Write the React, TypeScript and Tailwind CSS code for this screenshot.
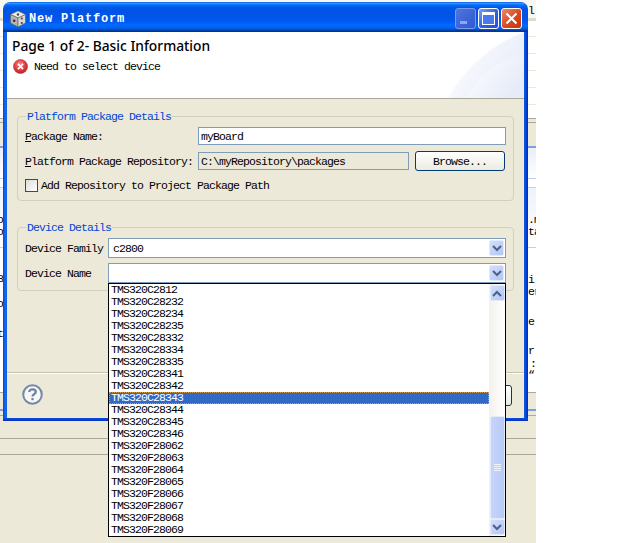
import React from "react";

const monoBase = "font-['Liberation_Mono',monospace] text-[11.5px] tracking-[-0.9px] leading-[12px]";
const mono = `${monoBase} text-black`;
// flex rows center their children, so 2px of top padding moves the text down by 1px
const label = `${mono} pt-[2px]`;

const devices = [
  "TMS320C2812", "TMS320C28232", "TMS320C28234", "TMS320C28235", "TMS320C28332", "TMS320C28334", "TMS320C28335",
  "TMS320C28341", "TMS320C28342", "TMS320C28343", "TMS320C28344", "TMS320C28345", "TMS320C28346", "TMS320F28062",
  "TMS320F28063", "TMS320F28064", "TMS320F28065", "TMS320F28066", "TMS320F28067", "TMS320F28068", "TMS320F28069",
];

function Chevron({ up = false }: { up?: boolean }) {
  return (
    <svg width="10" height="7" viewBox="0 0 10 7">
      <path d={up ? "M1 6 L5 2 L9 6" : "M1 1 L5 5 L9 1"} fill="none" stroke="#4d6185" strokeWidth="2" />
    </svg>
  );
}

function ArrowButton({ up = false }: { up?: boolean }) {
  return (
    <div className="w-[15px] h-[16px] rounded-[2px] border border-[#e2eafc] bg-gradient-to-br from-[#d3dffc] to-[#b2c5f6] flex items-center justify-center">
      <Chevron up={up} />
    </div>
  );
}

function Combo({ value }: { value: string }) {
  return (
    <div className="flex-1 h-[20px] border border-[#7f9db9] bg-white flex items-center justify-between pl-[4px] pr-[1px]">
      <span className={label}>{value}</span>
      <ArrowButton />
    </div>
  );
}

function Group({ title, children }: { title: string; children: React.ReactNode }) {
  return (
    <fieldset className="mx-[10px] w-[497px] border border-[#d0d0bf] rounded-[4px] pl-[7px] pr-[7px]">
      <legend className={`${monoBase} text-[#0046d5] ml-[1px] px-[1px] translate-y-[1px]`}>{title}</legend>
      {children}
    </fieldset>
  );
}

function DiceIcon() {
  return (
    <svg width="18" height="18" viewBox="0 0 18 18" className="shrink-0">
      <path d="M9 1 L16.5 4.5 L9 8 L1.5 4.5 Z" fill="#ecece8" stroke="#6d6d6d" strokeWidth="0.6" />
      <path d="M1.5 4.5 L9 8 V17 L1.5 13 Z" fill="#b5b5b0" stroke="#5a5a5a" strokeWidth="0.6" />
      <path d="M16.5 4.5 L9 8 V17 L16.5 13 Z" fill="#d8d8d3" stroke="#5a5a5a" strokeWidth="0.6" />
      <circle cx="9" cy="4.5" r="1.2" fill="#444" />
      <circle cx="5.2" cy="10.8" r="1.3" fill="#333" />
      <circle cx="12.8" cy="8.5" r="1.1" fill="#444" />
      <circle cx="12.8" cy="13" r="1.1" fill="#444" />
    </svg>
  );
}

function ErrorIcon() {
  return (
    <svg width="15" height="15" viewBox="0 0 15 15" className="shrink-0">
      <defs>
        <radialGradient id="err" cx="45%" cy="35%" r="70%">
          <stop offset="0" stopColor="#f78b8b" />
          <stop offset="0.6" stopColor="#dc3a3f" />
          <stop offset="1" stopColor="#b01c25" />
        </radialGradient>
      </defs>
      <circle cx="7.5" cy="7.5" r="7" fill="url(#err)" stroke="#a8333a" strokeWidth="0.6" />
      <path d="M5 4.8 L10 10.2 M10 4.8 L5 10.2" stroke="#fff" strokeWidth="1.8" />
    </svg>
  );
}

function HelpIcon() {
  return (
    <svg width="21" height="21" viewBox="0 0 21 21">
      <circle cx="10.5" cy="10.5" r="9.3" fill="#f6f6f4" stroke="#7488a8" strokeWidth="2" />
      <path d="M7.2 8 C7.2 4.6 13.8 4.6 13.8 8 C13.8 10.3 10.5 10 10.5 12.6" fill="none" stroke="#6d7f9f" strokeWidth="2.2" />
      <rect x="9.4" y="14" width="2.2" height="2.2" fill="#6d7f9f" />
    </svg>
  );
}

function Caption({ kind }: { kind: "min" | "max" | "close" }) {
  if (kind === "close") {
    return (
      <div className="w-[21px] h-[21px] rounded-[3px] border border-white bg-[linear-gradient(135deg,#ea8a6c,#d9481f_55%,#c5350c)] flex items-center justify-center">
        <svg width="13" height="13" viewBox="0 0 13 13">
          <path d="M1.5 1.5 L11.5 11.5 M11.5 1.5 L1.5 11.5" stroke="#fff" strokeWidth="2" />
        </svg>
      </div>
    );
  }
  if (kind === "max") {
    return (
      <div className="w-[21px] h-[21px] rounded-[3px] border border-white bg-[linear-gradient(135deg,#7f9ff0,#2f5fe0_55%,#2450d8)] flex items-center justify-center">
        <div className="w-[13px] h-[13px] border border-white border-t-[3px] bg-[#4a78ee]" />
      </div>
    );
  }
  return (
    <div className="w-[21px] h-[21px] rounded-[3px] border border-[#7d9ae8] bg-[linear-gradient(135deg,#4f74dc,#2f59d4)] flex items-end pl-[4px] pb-[4px]">
      <div className="w-[7px] h-[3px] bg-[#8fa6ea]" />
    </div>
  );
}

function Dialog() {
  return (
    <div className="absolute left-[3px] top-[2px] w-[525px] h-[419px] flex flex-col">
      {/* title bar */}
      <div className="h-[30px] shrink-0 rounded-t-[7px] flex items-center pl-[6px] pr-[6px] pt-[3px] bg-[linear-gradient(180deg,#0058ee_0%,#3593ff_4%,#288eff_6%,#127dff_8%,#036ffc_10%,#0262ee_14%,#0057e5_20%,#0054e3_24%,#0055eb_56%,#005bf5_66%,#026afe_76%,#0062ef_86%,#0052d6_92%,#0040ab_94%,#003092_100%)]">
        <DiceIcon />
        <span className="ml-[2px] font-['Liberation_Mono',monospace] font-bold text-[12px] tracking-[0.8px] text-white">New Platform</span>
        <div className="ml-auto flex gap-[2px]">
          <Caption kind="min" />
          <Caption kind="max" />
          <Caption kind="close" />
        </div>
      </div>

      <div className="flex-1 flex min-h-0">
        <div className="w-[4px] bg-gradient-to-r from-[#0c3fd6] via-[#1767ee] to-[#0f5fea]" />
        <div className="w-[517px] flex flex-col bg-[#ece9d8]">
          {/* header */}
          <div className="relative h-[67px] shrink-0 bg-white border-b border-[#aca899] pl-[5px] pt-[6px]">
            <svg className="absolute right-0 top-0" width="80" height="66" viewBox="0 0 80 66">
              <defs>
                <linearGradient id="arc" x1="0" x2="1" y1="0" y2="0.6">
                  <stop offset="0.1" stopColor="#ffffff" />
                  <stop offset="1" stopColor="#e6ebf8" />
                </linearGradient>
              </defs>
              <path d="M4 66 Q30 20 80 0 V66 Z" fill="url(#arc)" />
              <path d="M22 66 Q42 30 80 22 V66 Z" fill="url(#arc)" opacity="0.75" />
            </svg>
            <div className="relative font-['Noto_Sans',sans-serif] font-medium text-[13.8px] leading-[16px] text-black">Page 1 of 2- Basic Information</div>
            <div className="relative mt-[5px] ml-[1px] flex items-center gap-[6px]">
              <ErrorIcon />
              <span className={mono}>Need to select device</span>
            </div>
          </div>

          <div className="flex-1 flex flex-col pt-[11px]">
            <Group title="Platform Package Details">
              <div className="mt-[5px] flex items-center h-[18px]">
                <span className={`${label} w-[173px]`}><u>P</u>ackage Name:</span>
                <div className={`${label} flex-1 h-[18px] border border-[#7f9db9] bg-white pl-[2px] flex items-center`}>myBoard</div>
              </div>
              <div className="mt-[6px] flex items-center h-[20px]">
                <span className={`${label} w-[173px]`}><u>P</u>latform Package Repository:</span>
                <div className={`${label} w-[211px] h-[18px] border border-[#7f9db9] pl-[2px] flex items-center`}>C:\myRepository\packages</div>
                <button className={`${label} ml-[6px] w-[90px] h-[20px] rounded-[3px] border border-[#003c74] bg-gradient-to-b from-white to-[#ecebe0] flex items-center justify-center`}>Browse...</button>
              </div>
              <div className="mt-[7px] mb-[8px] flex items-center gap-[3px] h-[14px]">
                <div className="w-[13px] h-[13px] border border-[#1c5180] bg-gradient-to-br from-[#dcdcd7] to-white" />
                <span className={label}>Add Repository to Project Package Path</span>
              </div>
            </Group>

            <div className="h-[20px] shrink-0" />

            <Group title="Device Details">
              <div className="mt-[5px] flex items-center">
                <span className={`${label} w-[83px]`}>Device Family</span>
                <Combo value="c2800" />
              </div>
              <div className="mt-[5px] mb-[7px] flex items-center">
                <span className={`${label} w-[83px]`}>Device Name</span>
                <Combo value="" />
              </div>
            </Group>

            {/* footer */}
            <div className="mt-auto h-[46px] shrink-0 border-t border-t-[#c4c2b3] shadow-[inset_0_1px_0_#fff] flex items-start justify-between pl-[15px] pr-[12px]">
              <div className="mt-[11px]"><HelpIcon /></div>
              <div className="mt-[12px] w-[75px] h-[21px] rounded-[3px] border border-[#003c74] bg-gradient-to-b from-white to-[#ecebe0]" />
            </div>
          </div>
        </div>
        <div className="w-[4px] bg-gradient-to-r from-[#0b5be6] via-[#0b46d8] to-[#0029b0]" />
      </div>
      <div className="h-[3px] shrink-0 bg-gradient-to-b from-[#0b50e0] to-[#0a2fb8]" />
    </div>
  );
}

function DeviceList() {
  return (
    <div className="absolute left-[108px] top-[283px] w-[398px] h-[254px] border border-black bg-white flex">
      <div className="w-[380px]">
        {devices.map((d) =>
          d === "TMS320C28343" ? (
            <div key={d} className={`h-[12px] pl-[2px] ${monoBase} text-white bg-[#316ac5] outline-1 outline-dotted outline-[#d19a4c] -outline-offset-1`}>
              {d}
            </div>
          ) : (
            <div key={d} className={`h-[12px] pl-[2px] ${mono}`}>
              {d}
            </div>
          )
        )}
      </div>
      <div className="w-[16px] flex flex-col items-center pt-[1px] pb-[1px] bg-gradient-to-r from-[#f3f1ec] to-white">
        <ArrowButton up />
        <div className="mt-auto w-[15px] h-[103px] rounded-[2px] border border-[#e2eafc] bg-gradient-to-r from-[#c5d4fb] to-[#b8caf8] flex flex-col items-center justify-center gap-[1px]">
          <div className="w-[7px] h-[1px] bg-[#eef3fe]" />
          <div className="w-[7px] h-[1px] bg-[#eef3fe]" />
          <div className="w-[7px] h-[1px] bg-[#eef3fe]" />
          <div className="w-[7px] h-[1px] bg-[#eef3fe]" />
        </div>
        <ArrowButton />
      </div>
    </div>
  );
}

function Desktop() {
  return (
    <div className="w-[536px] h-[543px] flex flex-col bg-[#ece9d8]">
      <div className="h-[18px] bg-[#f8f7f2]" />
      <div className="h-[3px] bg-[#dedbca]" />
      <div className="h-[16px] bg-white border-b border-[#ece9d8]" />
      <div className="h-[17px] bg-white border-b border-[#ece9d8]" />
      <div className="h-[17px] bg-white border-b border-[#ece9d8]" />
      <div className="h-[17px] bg-white border-b border-[#ece9d8]" />
      <div className="h-[17px] bg-white border-b border-[#ece9d8]" />
      <div className="h-[13px] bg-white" />
      <div className="h-[5px] border-y border-[#aca899]" />
      <div className="h-[23px]" />
      <div className="h-[2px] bg-[#7d9ee0]" />
      <div className="h-[30px] bg-gradient-to-b from-[#e8eefb] to-white" />
      <div className="h-[1px] bg-[#bcd0f5]" />
      <div className="h-[8px] bg-white" />
      <div className="h-[1px] bg-[#bcd0f5]" />
      <div className="h-[59px] bg-gradient-to-b from-[#eef2fc] to-white" />
      <div className="h-[1px] bg-[#bcd0f5]" />
      <div className="h-[144px] bg-white" />
      <div className="h-[1px] bg-[#aca899]" />
      <div className="h-[16px]" />
      <div className="h-[2px] bg-[#7d9ee0]" />
      <div className="h-[4px]" />
      <div className="h-[1px] bg-[#aca899]" />
      <div className="h-[22px]" />
      <div className="h-[1px] bg-[#aca899]" />
      <div className="h-[15px]" />
      <div className="h-[1px] bg-[#aca899]" />
    </div>
  );
}

export default function App() {
  return (
    <div className="relative w-[640px] h-[543px] overflow-hidden bg-white">
      <Desktop />

      {/* bits of the editor text showing behind the dialog */}
      <span className={`${mono} absolute left-[528px] top-[5px] w-[8px] overflow-hidden`}>l</span>
      <span className={`${mono} absolute left-[528px] top-[214px] w-[8px] overflow-hidden whitespace-nowrap`}>.m</span>
      <span className={`${mono} absolute left-[528px] top-[226px] w-[8px] overflow-hidden whitespace-nowrap`}>ta</span>
      <span className={`${mono} absolute left-[528px] top-[274px] w-[8px] overflow-hidden whitespace-nowrap`}>i</span>
      <span className={`${mono} absolute left-[528px] top-[286px] w-[8px] overflow-hidden whitespace-nowrap`}>er</span>
      <span className={`${mono} absolute left-[528px] top-[316px] w-[8px] overflow-hidden whitespace-nowrap`}>e:</span>
      <span className={`${mono} absolute left-[528px] top-[345px] w-[8px] overflow-hidden whitespace-nowrap`}>r:</span>
      <span className={`${mono} absolute left-[530px] top-[358px] w-[6px] h-[10px] overflow-hidden whitespace-nowrap`}>:</span>
      <span className={`${mono} absolute left-[528px] top-[369px] w-[8px] overflow-hidden whitespace-nowrap`}>“</span>
      <span className={`${mono} absolute -left-[3px] top-[214px]`}>o</span>
      <span className={`${mono} absolute -left-[3px] top-[226px]`}>o</span>
      <span className={`${mono} absolute -left-[3px] top-[273px]`}>B</span>
      <span className={`${mono} absolute -left-[3px] top-[298px]`}>o</span>
      <span className={`${mono} absolute -left-[3px] top-[328px]`}>t</span>

      <Dialog />
      <DeviceList />
    </div>
  );
}
